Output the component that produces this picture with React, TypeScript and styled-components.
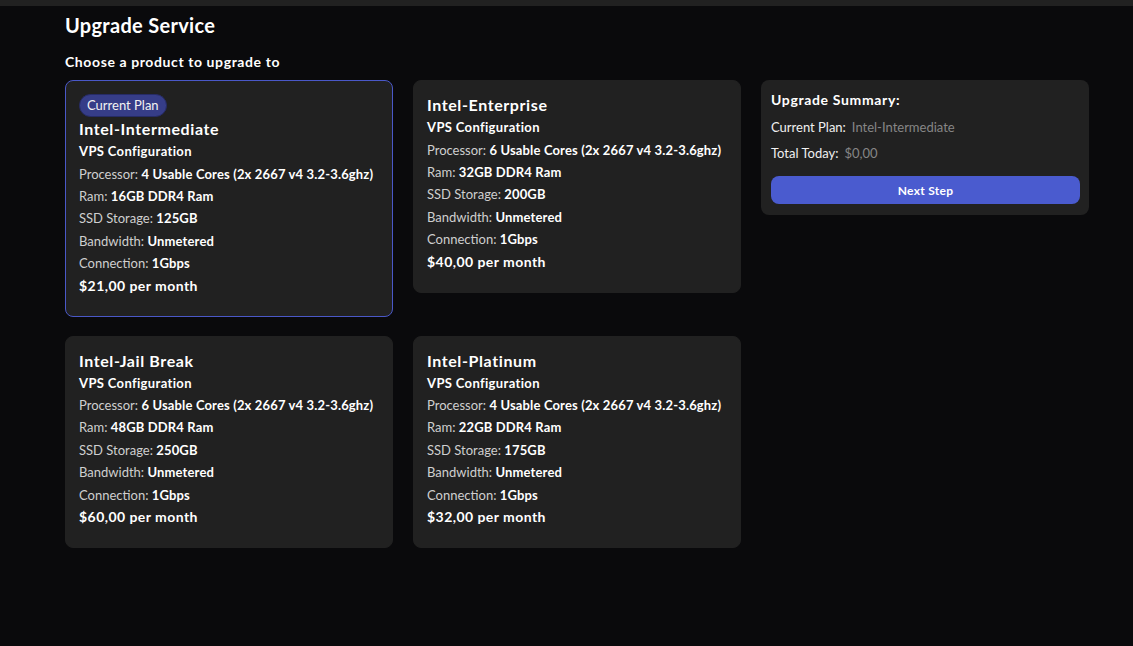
import * as React from 'react';
import styled, { createGlobalStyle } from 'styled-components';

const baseFont = `'Lato', 'Noto Sans', 'Liberation Sans', sans-serif`;

const GlobalStyle = createGlobalStyle`
  html, body {
    margin: 0;
    padding: 0;
    background: #0a0a0c;
  }
  body {
    font-family: ${baseFont};
    color: #fff;
  }
`;

interface Plan {
  name: string;
  cores: string;
  ram: string;
  storage: string;
  price: string;
  current?: boolean;
}

const plans: Array<Plan> = [
  { name: 'Intel-Intermediate', cores: '4', ram: '16GB', storage: '125GB', price: '$21,00', current: true },
  { name: 'Intel-Enterprise', cores: '6', ram: '32GB', storage: '200GB', price: '$40,00' },
  { name: 'Intel-Jail Break', cores: '6', ram: '48GB', storage: '250GB', price: '$60,00' },
  { name: 'Intel-Platinum', cores: '4', ram: '22GB', storage: '175GB', price: '$32,00' },
];

const TopBar = styled.div`
  height: 6px;
  background: #212121;
`;

const Page = styled.div`
  padding: 8px 65px 40px;
  min-height: 600px;
  box-sizing: border-box;
`;

const Title = styled.h1`
  margin: 0;
  font-size: 20px;
  line-height: 22px;
  font-weight: 700;
  letter-spacing: 0.3px;
`;

const Subtitle = styled.h2`
  margin: 17px 0 9px;
  font-size: 14px;
  line-height: 18px;
  font-weight: 700;
  letter-spacing: 0.6px;
`;

const Grid = styled.div`
  display: grid;
  grid-template-columns: repeat(3, 328px);
  column-gap: 20px;
  row-gap: 19px;
  align-items: start;
`;

const Card = styled.div<{ $active?: boolean }>`
  background: #212121;
  border: 1px solid ${props => (props.$active ? '#4a58c8' : '#212121')};
  border-radius: 8px;
  padding: 13px 13px 19px;
  box-sizing: border-box;
  cursor: pointer;
`;

const Badge = styled.span`
  display: inline-block;
  background: #363d88;
  border: 1px solid #262b66;
  border-radius: 12px;
  padding: 0 7px;
  font-size: 13px;
  line-height: 21px;
  color: #f2f2f2;
  margin-bottom: 1px;
`;

const PlanName = styled.div`
  font-size: 16px;
  line-height: 22px;
  font-weight: 700;
  letter-spacing: 0.6px;
`;

const ConfigLabel = styled.div`
  font-size: 13px;
  line-height: 22.5px;
  font-weight: 700;
  letter-spacing: 0.35px;
`;

const SpecRow = styled.div`
  font-size: 13px;
  line-height: 22.4px;
  color: #cfcfcf;

  b {
    color: #fff;
    font-weight: 700;
    letter-spacing: 0.15px;
  }
`;

const Price = styled.div`
  font-size: 14px;
  line-height: 22px;
  font-weight: 700;
  letter-spacing: 0.45px;
`;

const Summary = styled.div`
  background: #212121;
  border-radius: 8px;
  padding: 10px 9px 10px 10px;
  display: flex;
  flex-direction: column;
  gap: 6px;
`;

const SummaryTitle = styled.div`
  font-size: 14px;
  line-height: 20px;
  font-weight: 700;
  letter-spacing: 0.65px;
  margin-bottom: 1px;
`;

const SummaryRow = styled.div`
  display: flex;
  gap: 6px;
  font-size: 13px;
  line-height: 20px;
  color: #f0f0f0;
`;

const SummaryValue = styled.span`
  color: #868686;
`;

const NextButton = styled.button`
  margin-top: 7px;
  margin-bottom: 1px;
  height: 28px;
  border: none;
  border-radius: 8px;
  background: #4a5bcf;
  color: #fff;
  font-family: ${baseFont};
  font-size: 12px;
  font-weight: 700;
  letter-spacing: 0.3px;
  cursor: pointer;
`;

const PlanCard = ({ plan }: { plan: Plan }) => (
  <Card $active={plan.current}>
    {plan.current ? <Badge>Current Plan</Badge> : null}
    <PlanName>{plan.name}</PlanName>
    <ConfigLabel>VPS Configuration</ConfigLabel>
    <SpecRow>
      Processor: <b>{plan.cores} Usable Cores (2x 2667 v4 3.2-3.6ghz)</b>
    </SpecRow>
    <SpecRow>
      Ram: <b>{plan.ram} DDR4 Ram</b>
    </SpecRow>
    <SpecRow>
      SSD Storage: <b>{plan.storage}</b>
    </SpecRow>
    <SpecRow>
      Bandwidth: <b>Unmetered</b>
    </SpecRow>
    <SpecRow>
      Connection: <b>1Gbps</b>
    </SpecRow>
    <Price>{plan.price} per month</Price>
  </Card>
);

export default function App() {
  const current = plans.find(p => p.current);

  return (
    <React.Fragment>
      <GlobalStyle />
      <TopBar />
      <Page>
        <Title>Upgrade Service</Title>
        <Subtitle>Choose a product to upgrade to</Subtitle>
        <Grid>
          <PlanCard plan={plans[0]} />
          <PlanCard plan={plans[1]} />
          <Summary>
            <SummaryTitle>Upgrade Summary:</SummaryTitle>
            <SummaryRow>
              Current Plan: <SummaryValue>{current ? current.name : ''}</SummaryValue>
            </SummaryRow>
            <SummaryRow>
              Total Today: <SummaryValue>$0,00</SummaryValue>
            </SummaryRow>
            <NextButton>Next Step</NextButton>
          </Summary>
          <PlanCard plan={plans[2]} />
          <PlanCard plan={plans[3]} />
        </Grid>
      </Page>
    </React.Fragment>
  );
}
